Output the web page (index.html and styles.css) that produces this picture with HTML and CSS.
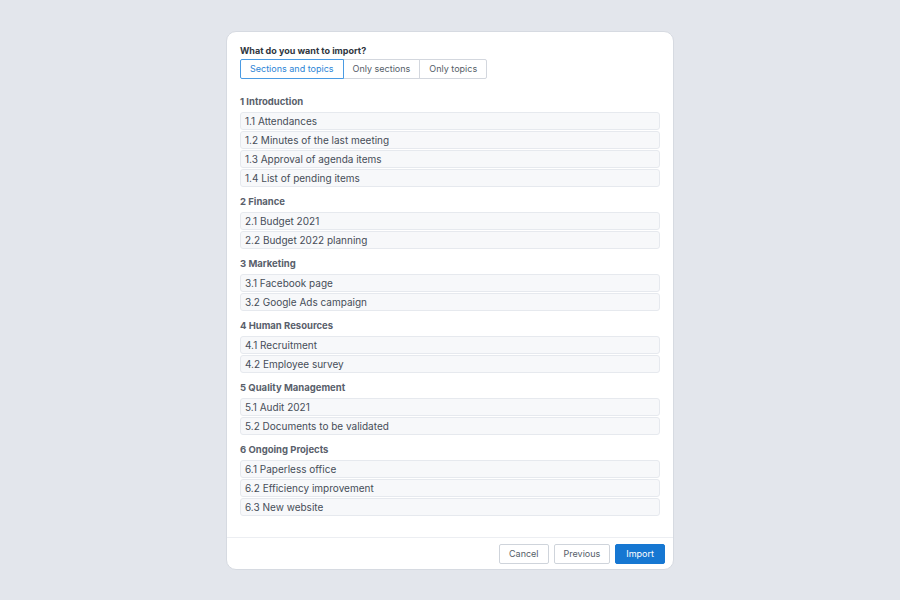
FILE: index.html
```html
<!DOCTYPE html>
<html>
  <head>
    <meta name="viewport" content="width=device-width, initial-scale=1.0">
    <title>Import</title>
    <link rel="stylesheet" href="styles.css">
  </head>
  <body>
    <div class="dialog">
      <div class="dialog-body">
        <div class="label">What do you want to import?</div>
        <div class="tabs">
          <button class="tab active">Sections and topics</button>
          <button class="tab">Only sections</button>
          <button class="tab">Only topics</button>
        </div>

        <div class="sections">
          <div class="section">
            <div class="section-title">1 Introduction</div>
            <div class="topic">1.1 Attendances</div>
            <div class="topic">1.2 Minutes of the last meeting</div>
            <div class="topic">1.3 Approval of agenda items</div>
            <div class="topic">1.4 List of pending items</div>
          </div>
          <div class="section">
            <div class="section-title">2 Finance</div>
            <div class="topic">2.1 Budget 2021</div>
            <div class="topic">2.2 Budget 2022 planning</div>
          </div>
          <div class="section">
            <div class="section-title">3 Marketing</div>
            <div class="topic">3.1 Facebook page</div>
            <div class="topic">3.2 Google Ads campaign</div>
          </div>
          <div class="section">
            <div class="section-title">4 Human Resources</div>
            <div class="topic">4.1 Recruitment</div>
            <div class="topic">4.2 Employee survey</div>
          </div>
          <div class="section">
            <div class="section-title">5 Quality Management</div>
            <div class="topic">5.1 Audit 2021</div>
            <div class="topic">5.2 Documents to be validated</div>
          </div>
          <div class="section">
            <div class="section-title">6 Ongoing Projects</div>
            <div class="topic">6.1 Paperless office</div>
            <div class="topic">6.2 Efficiency improvement</div>
            <div class="topic">6.3 New website</div>
          </div>
        </div>
      </div>
      <div class="dialog-footer">
        <button class="btn">Cancel</button>
        <button class="btn">Previous</button>
        <button class="btn primary">Import</button>
      </div>
    </div>
  </body>
</html>
```

FILE: styles.css
```css
html, body {
  height: 100%;
}
body {
  margin: 0;
  background-color: #e3e6ec;
  font-family: "Inter", "Open Sans", sans-serif;
  color: #444b55;
  display: flex;
  align-items: center;
  justify-content: center;
}
.dialog {
  width: 446px;
  background-color: #fff;
  border: 1px solid #d6dae1;
  border-radius: 10px;
  overflow: hidden;
}
.dialog-body {
  padding: 13px 13px 20px 13px;
}
.label {
  font-size: 9px;
  font-weight: 700;
  color: #2f3640;
  line-height: 12px;
}
.tabs {
  display: flex;
  margin-top: 2px;
}
.tab {
  font-family: inherit;
  font-size: 9px;
  color: #555d68;
  background: #fff;
  border: 1px solid #d3d7de;
  height: 20px;
  padding: 0 9px;
  margin-left: -1px;
}
.tab:first-child {
  margin-left: 0;
  border-radius: 2px 0 0 2px;
}
.tab:last-child {
  border-radius: 0 2px 2px 0;
}
.tab.active {
  color: #2b84d6;
  border-color: #4a9be3;
  position: relative;
}
.sections {
  margin-top: 17px;
}
.section + .section {
  margin-top: 9px;
}
.section-title {
  font-size: 9.5px;
  font-weight: 700;
  color: #59606b;
  line-height: 12px;
  margin-bottom: 4px;
}
.topic {
  font-size: 10px;
  line-height: 16px;
  height: 16px;
  padding: 0 4px;
  background-color: #f7f8fa;
  border: 1px solid #e6e9ee;
  border-radius: 3px;
  margin-bottom: 1px;
  color: #464d58;
}
.dialog-footer {
  border-top: 1px solid #eceef2;
  display: flex;
  justify-content: flex-end;
  gap: 5px;
  padding: 6px 8px 5px 8px;
}
.btn {
  font-family: inherit;
  font-size: 9px;
  height: 20px;
  padding: 0 9px;
  background: #fff;
  color: #555d68;
  border: 1px solid #cfd4db;
  border-radius: 2px;
}
.btn.primary {
  padding: 0 10px;
  background-color: #1677d2;
  border-color: #1677d2;
  color: #fff;
}
```
